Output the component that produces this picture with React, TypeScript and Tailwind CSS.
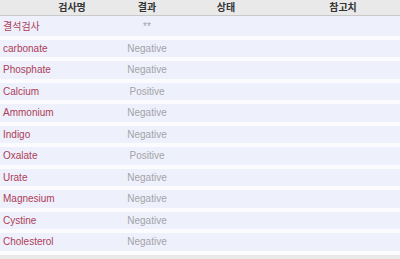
import React from 'react';

const rows: { name: string; result: string }[] = [
  { name: '결석검사', result: '**' },
  { name: 'carbonate', result: 'Negative' },
  { name: 'Phosphate', result: 'Negative' },
  { name: 'Calcium', result: 'Positive' },
  { name: 'Ammonium', result: 'Negative' },
  { name: 'Indigo', result: 'Negative' },
  { name: 'Oxalate', result: 'Positive' },
  { name: 'Urate', result: 'Negative' },
  { name: 'Magnesium', result: 'Negative' },
  { name: 'Cystine', result: 'Negative' },
  { name: 'Cholesterol', result: 'Negative' },
];

export default function App() {
  return (
    <div
      className="w-[400px] h-[259px] overflow-hidden bg-[#e9e9e9] text-[11px]"
      style={{ fontFamily: '"Liberation Sans", "Noto Sans CJK KR", sans-serif' }}
    >
      {/* header */}
      <div className="grid grid-cols-[120px_54px_104px_122px] h-[16px] items-center bg-[#e9e9e9] border-b border-[#c9c9c9] font-bold text-[#333] text-[10px]">
        <div className="text-center pl-[24px]">검사명</div>
        <div className="text-center">결과</div>
        <div className="text-center">상태</div>
        <div className="text-center pl-[8px]">참고치</div>
      </div>

      <div className="bg-[#eef0fc] pt-[2px]">
        {rows.map((row) => (
          <div key={row.name}>
            <div className="grid grid-cols-[120px_54px_104px_122px] h-[17.5px] items-center">
              <div className="pl-[3px] text-[#ad3d57] text-[10px]">{row.name}</div>
              <div className="text-center text-[#a3a3a8] text-[10px]">{row.result}</div>
              <div />
              <div />
            </div>
            <div className="h-[4px] bg-[repeating-linear-gradient(90deg,#ffffff_0px,#ffffff_1px,#f8f9fe_1px,#f8f9fe_2px)]" />
          </div>
        ))}
      </div>
    </div>
  );
}
